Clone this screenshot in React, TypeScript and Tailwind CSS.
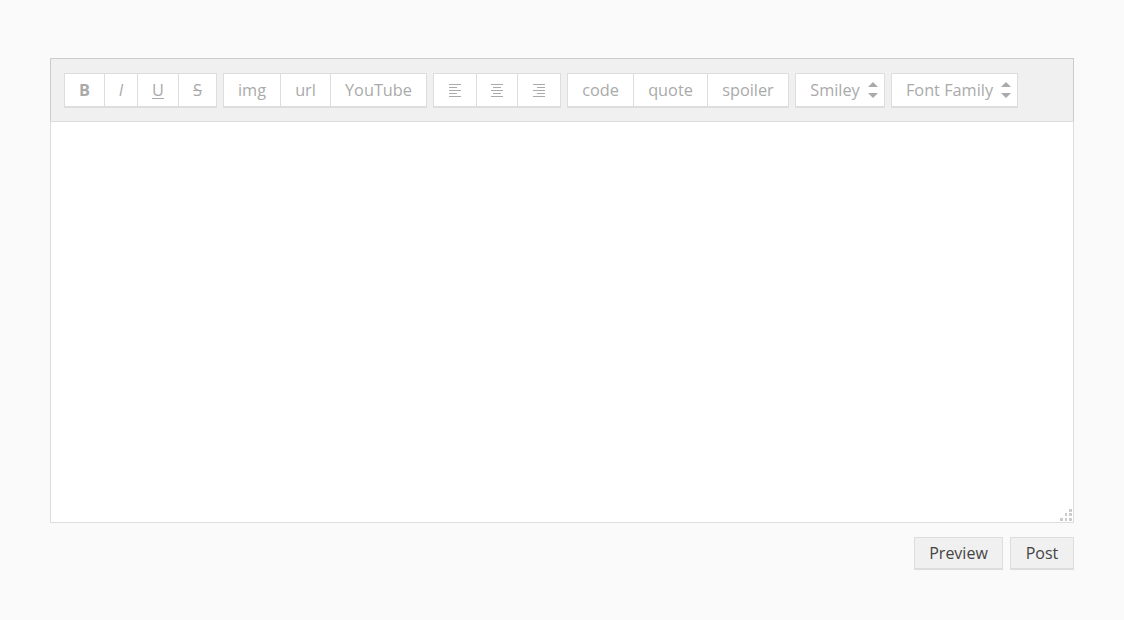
const btn = "flex h-[35px] items-center justify-center border-y border-r border-[#ddd] border-b-2 bg-white text-[#aaa] first:border-l";

function Align({ kind }: { kind: 'left' | 'center' | 'right' }) {
  const rows = [12, 8, 12, 8, 12];
  return (
    <svg width="12" height="13" viewBox="0 0 12 13">
      {rows.map((w, i) => {
        const x = kind === 'left' ? 0 : kind === 'right' ? 12 - w : (12 - w) / 2;
        return <rect key={i} x={x} y={i * 3} width={w} height="1" fill="#aaa" />;
      })}
    </svg>
  );
}

function Arrows() {
  return (
    <svg width="10" height="16" viewBox="0 0 10 16" className="shrink-0">
      <path d="M5 0L10 5H0Z" fill="#aaa" />
      <path d="M5 16L10 11H0Z" fill="#aaa" />
    </svg>
  );
}

export default function App() {
  return (
    <div className="h-[620px] bg-[#fafafa] px-[50px] pt-[58px] font-['Open_Sans',sans-serif] text-[16.3px]">
      {/* Toolbar */}
      <div className="flex h-[64px] items-start gap-[6px] border border-[#ccc] border-b-[#ddd] bg-[#f0f0f0] px-[13px] pt-[14px]">
        <div className="flex">
          <div className={`${btn} w-[41px] font-bold`}>B</div>
          <div className={`${btn} w-[33px] italic`}>I</div>
          <div className={`${btn} w-[41px] underline underline-offset-2`}>U</div>
          <div className={`${btn} w-[38px] line-through`}>S</div>
        </div>
        <div className="flex">
          <div className={`${btn} w-[58px]`}>img</div>
          <div className={`${btn} w-[50px]`}>url</div>
          <div className={`${btn} w-[96px]`}>YouTube</div>
        </div>
        <div className="flex">
          <div className={`${btn} w-[44px]`}><Align kind="left" /></div>
          <div className={`${btn} w-[41px]`}><Align kind="center" /></div>
          <div className={`${btn} w-[43px]`}><Align kind="right" /></div>
        </div>
        <div className="flex">
          <div className={`${btn} w-[67px]`}>code</div>
          <div className={`${btn} w-[74px]`}>quote</div>
          <div className={`${btn} w-[81px]`}>spoiler</div>
        </div>
        <div className={`${btn} w-[90px] gap-[8px] border-l pl-[8px]`}>
          Smiley
          <Arrows />
        </div>
        <div className={`${btn} w-[127px] gap-[8px] border-l pl-[8px]`}>
          Font Family
          <Arrows />
        </div>
      </div>

      {/* Text area */}
      <div className="relative h-[401px] border-x border-b border-[#ddd] bg-white">
        <svg width="13" height="13" viewBox="0 0 13 13" className="absolute bottom-[1px] right-[1px]">
          <g fill="#ccc">
            <rect x="10" y="1" width="3" height="3" />
            <rect x="6" y="5" width="2" height="3" />
            <rect x="10" y="5" width="3" height="3" />
            <rect x="1" y="10" width="3" height="3" />
            <rect x="6" y="10" width="2" height="3" />
            <rect x="10" y="10" width="3" height="3" />
          </g>
        </svg>
      </div>

      {/* Actions */}
      <div className="mt-[14px] flex justify-end gap-[7px] text-[#444]">
        <button className="h-[33px] w-[89px] border border-[#ddd] border-b-2 bg-[#f0f0f0] text-[16px]">Preview</button>
        <button className="h-[33px] w-[64px] border border-[#ddd] border-b-2 bg-[#f0f0f0] text-[16px]">Post</button>
      </div>
    </div>
  );
}
